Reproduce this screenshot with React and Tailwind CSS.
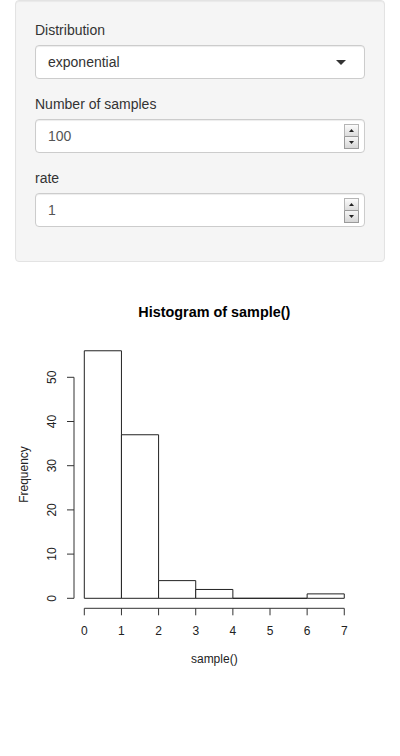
import React from "react";

const font = { fontFamily: '"Liberation Sans", Arial, sans-serif' };

function Spinner() {
  return (
    <div className="flex flex-col w-[15px] h-[25px] mr-[5px]">
      <div className="flex-1 flex items-center justify-center bg-gradient-to-b from-[#fbfbfb] to-[#dcdcdc] border border-[#b5b5b5] border-b-[#9a9a9a]">
        <svg width="5" height="3" viewBox="0 0 5 3"><path d="M2.5 0L5 3H0z" fill="#222" /></svg>
      </div>
      <div className="flex-1 flex items-center justify-center bg-gradient-to-b from-[#f6f6f6] to-[#d6d6d6] border border-t-0 border-[#9a9a9a]">
        <svg width="5" height="3" viewBox="0 0 5 3"><path d="M0 0H5L2.5 3z" fill="#222" /></svg>
      </div>
    </div>
  );
}

function Field({ label, children }) {
  return (
    <div className="mb-[15px]">
      <div className="text-[14px] leading-[20px] text-[#333] mb-[5px]">{label}</div>
      {children}
    </div>
  );
}

function NumberBox({ value }) {
  return (
    <div className="h-[34px] flex items-center justify-between bg-white border border-[#ccc] rounded-[4px] shadow-[inset_0_1px_1px_rgba(0,0,0,0.075)] pl-[12px]">
      <span className="text-[14px] text-[#555]">{value}</span>
      <Spinner />
    </div>
  );
}

function Histogram() {
  const x0 = 69.3;
  const dx = 37.14;
  const y0 = 316.3;
  const dy = 4.42;
  const counts = [56, 37, 4, 2, 0, 0, 1];
  const yTicks = [0, 10, 20, 30, 40, 50];
  const xTicks = [0, 1, 2, 3, 4, 5, 6, 7];
  return (
    <svg width="370" height="400" viewBox="0 0 370 400" style={font}>
      <text x="199.3" y="35" textAnchor="middle" fontSize="14.4" fontWeight="bold" fill="#000">
        Histogram of sample()
      </text>
      {counts.map((c, i) => {
        const l = x0 + dx * i;
        const r = l + dx;
        const top = y0 - c * dy;
        return (
          <path
            key={i}
            d={`M${l} ${y0}V${top}H${r}V${y0}Z`}
            fill="white"
            stroke="#222"
            strokeWidth="1"
          />
        );
      })}
      <line x1="59" y1={y0} x2="59" y2={y0 - 50 * dy} stroke="#333" />
      {yTicks.map((t) => (
        <g key={t}>
          <line x1="52" y1={y0 - t * dy} x2="59" y2={y0 - t * dy} stroke="#333" />
          <text
            transform={`translate(40.5 ${y0 - t * dy}) rotate(-90)`}
            textAnchor="middle"
            fontSize="12"
            fill="#222"
          >
            {t}
          </text>
        </g>
      ))}
      <line x1={x0} y1="326.3" x2={x0 + 7 * dx} y2="326.3" stroke="#333" />
      {xTicks.map((t) => (
        <g key={t}>
          <line x1={x0 + t * dx} y1="326.3" x2={x0 + t * dx} y2="333.3" stroke="#333" />
          <text x={x0 + t * dx} y="353" textAnchor="middle" fontSize="12" fill="#222">
            {t}
          </text>
        </g>
      ))}
      <text x="199.3" y="381" textAnchor="middle" fontSize="12" fill="#222">
        sample()
      </text>
      <text transform="translate(13 192.5) rotate(-90)" textAnchor="middle" fontSize="12" fill="#222">
        Frequency
      </text>
    </svg>
  );
}

export default function App() {
  return (
    <div className="min-h-[756px] bg-white px-[15px]" style={font}>
      <div className="bg-[#f5f5f5] border border-[#e3e3e3] rounded-[4px] shadow-[inset_0_1px_1px_rgba(0,0,0,0.05)] p-[19px] mb-[20px]">
        <Field label="Distribution">
          <div className="h-[34px] flex items-center justify-between bg-white border border-[#ccc] rounded-[4px] shadow-[inset_0_1px_1px_rgba(0,0,0,0.075)] px-[12px]">
            <span className="text-[14px] text-[#333]">exponential</span>
            <svg width="10" height="5" viewBox="0 0 10 5" className="mr-[6px]">
              <path d="M0 0H10L5 5z" fill="#333" />
            </svg>
          </div>
        </Field>
        <Field label="Number of samples">
          <NumberBox value="100" />
        </Field>
        <Field label="rate">
          <NumberBox value="1" />
        </Field>
      </div>
      <Histogram />
    </div>
  );
}
